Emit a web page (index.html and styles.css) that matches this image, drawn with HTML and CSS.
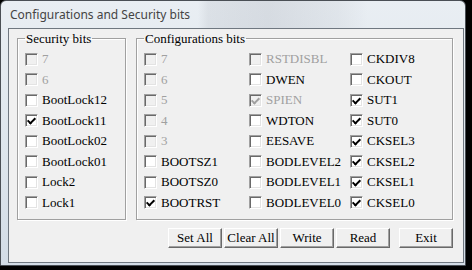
FILE: index.html
```html
<!DOCTYPE html>
<html lang="en">
<head>
  <meta charset="UTF-8" />
  <title>Configurations and Security bits</title>
  <link rel="stylesheet" href="styles.css">
</head>
<body>
  <div class="window">
    <div class="titlebar">Configurations and Security bits</div>
    <div class="client">
      <div class="groups">
        <fieldset class="group security">
          <legend>Security bits</legend>
          <div class="bits">
            <label class="bit disabled"><input type="checkbox" disabled>7</label>
            <label class="bit disabled"><input type="checkbox" disabled>6</label>
            <label class="bit"><input type="checkbox">BootLock12</label>
            <label class="bit"><input type="checkbox" checked>BootLock11</label>
            <label class="bit"><input type="checkbox">BootLock02</label>
            <label class="bit"><input type="checkbox">BootLock01</label>
            <label class="bit"><input type="checkbox">Lock2</label>
            <label class="bit"><input type="checkbox">Lock1</label>
          </div>
        </fieldset>

        <fieldset class="group config">
          <legend>Configurations bits</legend>
          <div class="bits">
            <label class="bit disabled"><input type="checkbox" disabled>7</label>
            <label class="bit disabled"><input type="checkbox" disabled>6</label>
            <label class="bit disabled"><input type="checkbox" disabled>5</label>
            <label class="bit disabled"><input type="checkbox" disabled>4</label>
            <label class="bit disabled"><input type="checkbox" disabled>3</label>
            <label class="bit"><input type="checkbox">BOOTSZ1</label>
            <label class="bit"><input type="checkbox">BOOTSZ0</label>
            <label class="bit"><input type="checkbox" checked>BOOTRST</label>

            <label class="bit disabled"><input type="checkbox" disabled>RSTDISBL</label>
            <label class="bit"><input type="checkbox">DWEN</label>
            <label class="bit disabled"><input type="checkbox" checked disabled>SPIEN</label>
            <label class="bit"><input type="checkbox">WDTON</label>
            <label class="bit"><input type="checkbox">EESAVE</label>
            <label class="bit"><input type="checkbox">BODLEVEL2</label>
            <label class="bit"><input type="checkbox">BODLEVEL1</label>
            <label class="bit"><input type="checkbox">BODLEVEL0</label>

            <label class="bit"><input type="checkbox">CKDIV8</label>
            <label class="bit"><input type="checkbox">CKOUT</label>
            <label class="bit"><input type="checkbox" checked>SUT1</label>
            <label class="bit"><input type="checkbox" checked>SUT0</label>
            <label class="bit"><input type="checkbox" checked>CKSEL3</label>
            <label class="bit"><input type="checkbox" checked>CKSEL2</label>
            <label class="bit"><input type="checkbox" checked>CKSEL1</label>
            <label class="bit"><input type="checkbox" checked>CKSEL0</label>
          </div>
        </fieldset>
      </div>

      <div class="actions">
        <button>Set All</button>
        <button>Clear All</button>
        <button>Write</button>
        <button>Read</button>
        <button class="exit">Exit</button>
      </div>
    </div>
  </div>
</body>
</html>
```

FILE: styles.css
```css
body {
  margin: 0;
  width: 472px;
  height: 270px;
  background: #000;
  overflow: hidden;
}

/* Aero style window frame */
.window {
  box-sizing: border-box;
  width: 466px;
  height: 266px;
  border: 1px solid #4a4f55;
  border-radius: 6px 6px 0 0;
  padding: 0 1px 2px 7px;
  display: flex;
  flex-direction: column;
  background: linear-gradient(180deg, #e9eef3 0%, #dde5ec 60%, #d3dce6 100%);
}

.titlebar {
  height: 27px;
  flex: none;
  padding-left: 2px;
  font-family: "Noto Sans", sans-serif;
  font-size: 12px;
  line-height: 27px;
  color: #444;
  background: linear-gradient(90deg, transparent 190px, rgba(160,165,175,0.18) 200px, rgba(160,165,175,0.25) 260px, rgba(160,165,175,0.12) 330px, transparent 360px);
}

.client {
  flex: 1;
  border: 1px solid #6f7780;
  background: #f0f0f0;
  padding: 2px 10px 0 8px;
  display: flex;
  flex-direction: column;
  font-family: "Liberation Serif", "Times New Roman", serif;
  font-size: 13px;
  color: #000;
}

.groups {
  display: flex;
  gap: 10px;
}

/* Etched group boxes */
.group {
  box-sizing: border-box;
  height: 189px;
  margin: 0;
  padding: 3px 0 0 7px;
  border: 1px solid #a0a0a0;
  box-shadow: 1px 1px 0 #fff, inset 1px 1px 0 #fff;
}

.group legend {
  margin-left: 0;
  padding: 0 1px;
  line-height: 15px;
}

.security {
  width: 109px;
}

.config {
  flex: 1;
}

.bits {
  display: grid;
  grid-auto-flow: column;
  grid-template-rows: repeat(8, 20.5px);
}

.config .bits {
  grid-template-columns: 105px 101px 1fr;
}

.bit {
  display: flex;
  align-items: center;
  white-space: nowrap;
}

.bit.disabled {
  color: #a0a0a0;
}

/* Classic sunken checkbox */
.bit input {
  appearance: none;
  position: relative;
  box-sizing: border-box;
  width: 13px;
  height: 13px;
  margin: 0 4px 0 0;
  border: 1px solid;
  border-color: #a0a0a0 #fff #fff #a0a0a0;
  box-shadow: inset 1px 1px 0 #696969, inset -1px -1px 0 #e3e3e3;
  background: #fff;
}

.bit input:disabled {
  background: #f0f0f0;
}

.bit input:checked::after {
  content: "";
  position: absolute;
  left: 3px;
  top: 1px;
  width: 3px;
  height: 6px;
  border: solid #000;
  border-width: 0 2px 2px 0;
  transform: rotate(45deg);
}

.bit input:checked:disabled::after {
  border-color: #a0a0a0;
}

.actions {
  display: flex;
  justify-content: flex-end;
  gap: 2px;
  margin-top: 8px;
}

.actions button {
  box-sizing: border-box;
  width: 54px;
  height: 20px;
  padding: 0;
  font-family: "Liberation Serif", "Times New Roman", serif;
  font-size: 13px;
  color: #000;
  background: #f0f0f0;
  border: 1px solid;
  border-color: #fff #696969 #696969 #fff;
  box-shadow: inset -1px -1px 0 #a0a0a0;
}

.actions .exit {
  margin-left: 7px;
}
```
